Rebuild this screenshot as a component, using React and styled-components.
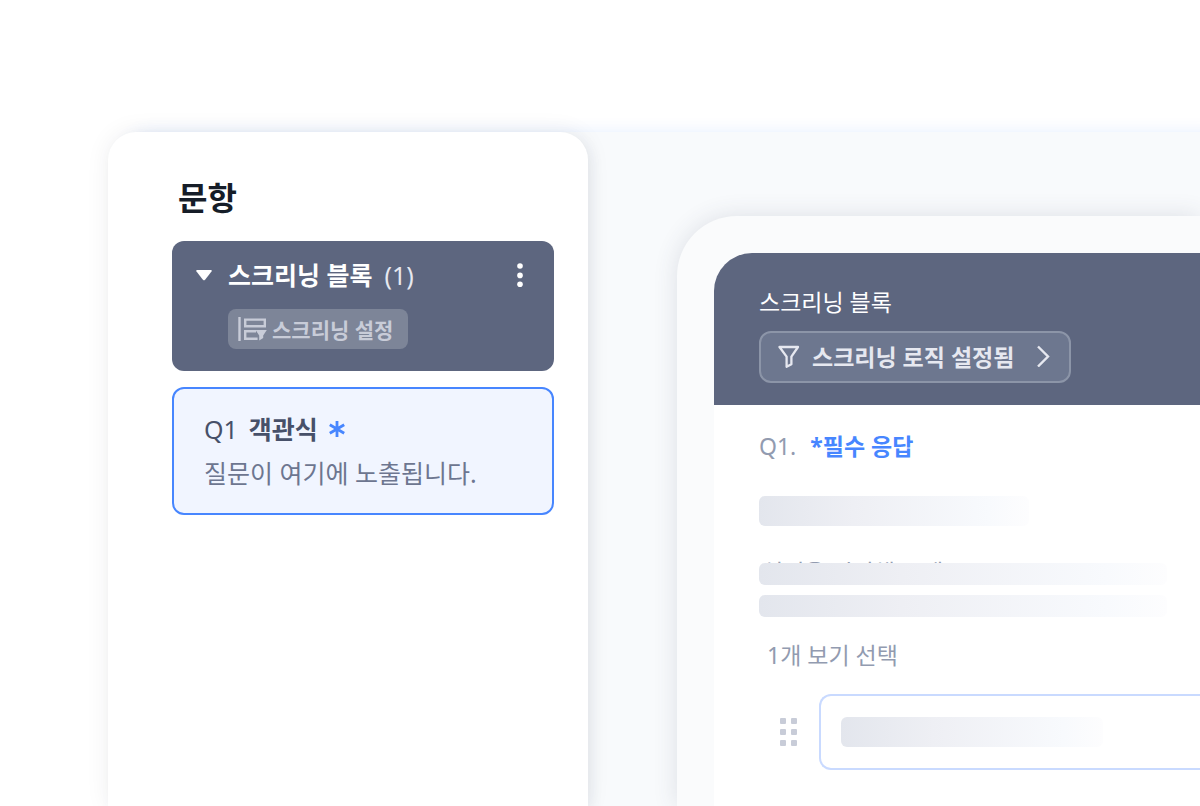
import * as React from "react"
import styled, { createGlobalStyle } from "styled-components"

const App = () => {
  return (
    <>
      <GlobalStyle />
      <Page>
        <Workspace>
          <Sidebar>
            <SidebarTitle>문항</SidebarTitle>
            <BlockCard>
              <BlockHeader>
                <IconButton aria-label="접기">
                  <svg width="16" height="11" viewBox="0 0 16 11">
                    <path d="M1.2 0h13.6q1.6 0 .7 1.4L9.3 9.6q-1.3 1.6-2.6 0L.5 1.4Q-.4 0 1.2 0z" fill="#fff" />
                  </svg>
                </IconButton>
                <BlockName>스크리닝 블록</BlockName>
                <BlockCount>(1)</BlockCount>
                <MoreButton aria-label="더보기">
                  <svg width="6" height="24" viewBox="0 0 6 24" fill="#fff">
                    <circle cx="3" cy="3" r="2.8" />
                    <circle cx="3" cy="12.4" r="2.8" />
                    <circle cx="3" cy="21.2" r="2.8" />
                  </svg>
                </MoreButton>
              </BlockHeader>
              <SettingChip>
                <ScreeningIcon />
                스크리닝 설정
              </SettingChip>
            </BlockCard>
            <QuestionCard>
              <QuestionName>
                <span>Q1</span>
                <b>객관식</b>
                <RequiredIcon />
              </QuestionName>
              <QuestionText>질문이 여기에 노출됩니다.</QuestionText>
            </QuestionCard>
          </Sidebar>
          <Canvas>
            <Device>
              <Screen>
                <ScreenHeader>
                  <ScreenTitle>스크리닝 블록</ScreenTitle>
                  <LogicButton>
                    <svg width="22" height="24" viewBox="0 0 22 24" fill="none" stroke="currentColor" strokeWidth="2.3" strokeLinejoin="round">
                      <path d="M1.5 3h18.5L13.4 12.6v7.6L8.6 22.8V12.6z" />
                    </svg>
                    스크리닝 로직 설정됨
                    <Chevron width="13" height="22" viewBox="0 0 13 22" fill="none" stroke="currentColor" strokeWidth="2.4">
                      <path d="M1 1.5l10 10L1 21.5" />
                    </Chevron>
                  </LogicButton>
                </ScreenHeader>
                <ScreenBody>
                  <RequiredLine>
                    <span>Q1.</span>
                    <b>*필수 응답</b>
                  </RequiredLine>
                  <Skeleton $width={270} $height={30} />
                  <Description>
                    <DescriptionText>설명을 입력해 주세요</DescriptionText>
                    <Skeleton $width={408} $height={22} />
                    <Skeleton $width={408} $height={22} />
                  </Description>
                  <Guide>1개 보기 선택</Guide>
                  <OptionRow>
                    <GripIcon />
                    <Option>
                      <Skeleton $width={262} $height={30} />
                    </Option>
                  </OptionRow>
                </ScreenBody>
              </Screen>
            </Device>
          </Canvas>
        </Workspace>
      </Page>
    </>
  )
}

const ScreeningIcon = () => (
  <svg width="30" height="24" viewBox="0 0 30 24" fill="none" stroke="currentColor" strokeWidth="2.4">
    <path d="M1.5 0v24" />
    <path d="M7.2 2.6h19.6v6.6H7.2z" />
    <path d="M18 14.2H7.2v7.6h12.4" />
    <path d="M17.6 13h11.2l-3.6 5.4V21l-4 2.4v-5z" fill="currentColor" stroke="none" />
  </svg>
)

const RequiredIcon = () => (
  <svg width="16" height="18" viewBox="0 0 16 18" fill="none" stroke="#4786ff" strokeWidth="2.8">
    <path d="M8 1v16M.8 4.8l14.4 8.4M15.2 4.8L.8 13.2" />
  </svg>
)

const GripIcon = () => (
  <svg width="18" height="28" viewBox="0 0 18 28" fill="#c8ccd8">
    {[0, 11, 22].map(y => (
      <React.Fragment key={y}>
        <rect x="0" y={y} width="6" height="6" rx="1" />
        <rect x="11" y={y} width="6" height="6" rx="1" />
      </React.Fragment>
    ))}
  </svg>
)

export default App

const GlobalStyle = createGlobalStyle`
  * {
    box-sizing: border-box;
  }
  body {
    margin: 0;
    background: #fff;
    font-family: "Noto Sans", "Noto Sans CJK KR", sans-serif;
    overflow-x: hidden;
  }
  button {
    font-family: inherit;
    cursor: pointer;
  }
  h2, p {
    margin: 0;
  }
  svg {
    flex-shrink: 0;
  }
`
const Page = styled.div`
  display: flex;
  min-height: 100vh;
  padding: 132px 0 0 108px;
  overflow: hidden;
`
const Workspace = styled.main`
  display: flex;
  flex: 1;
  min-width: 0;
  background: #f8fafc;
  border-top-left-radius: 28px;
  box-shadow: 16px 0 16px rgba(71, 134, 255, 0.14);
`
const Sidebar = styled.aside`
  display: flex;
  flex-direction: column;
  flex: 0 0 480px;
  padding: 46px 34px 0 64px;
  background: #fff;
  border-radius: 28px 28px 0 0;
  box-shadow: 0 0 24px rgba(40, 40, 50, 0.07), 4px 4px 12px rgba(93, 102, 127, 0.08);
`
const SidebarTitle = styled.h2`
  padding-left: 6px;
  color: #161d28;
  font-size: 32px;
  font-weight: 700;
  line-height: 40px;
`
const BlockCard = styled.section`
  margin-top: 23px;
  padding: 14px 24px 22px;
  background: #5d667f;
  border-radius: 12px;
`
const BlockHeader = styled.div`
  display: flex;
  align-items: center;
  height: 40px;
  color: #fff;
  font-size: 25px;
  line-height: 40px;
`
const IconButton = styled.button`
  display: flex;
  padding: 0;
  background: none;
  border: 0;
`
const MoreButton = styled(IconButton)`
  margin-left: auto;
  padding: 0 7px;
`
const BlockName = styled.b`
  margin-left: 16px;
`
const BlockCount = styled.span`
  margin-left: 12px;
  color: #e6e8f0;
`
const SettingChip = styled.button`
  display: flex;
  align-items: center;
  gap: 4px;
  height: 40px;
  margin: 14px 0 0 32px;
  padding: 0 15px 1px 10px;
  background: #7d8598;
  border: 0;
  border-radius: 8px;
  color: #c8ccd8;
  font-size: 21px;
  font-weight: 700;
`
const QuestionCard = styled.section`
  margin-top: 16px;
  padding: 20px 30px;
  background: #f1f5ff;
  border: 2px solid #4786ff;
  border-radius: 12px;
`
const QuestionName = styled.div`
  display: flex;
  align-items: center;
  gap: 11px;
  color: #475069;
  font-size: 25px;
  line-height: 40px;
`
const QuestionText = styled.p`
  margin-top: 4px;
  color: #6d7690;
  font-size: 25px;
  line-height: 40px;
`
const Canvas = styled.section`
  flex: 1;
  display: flex;
  min-width: 0;
  padding: 84px 0 0 89px;
`
const Device = styled.div`
  flex: 1;
  min-width: 0;
  padding: 37px 0 0 37px;
  background: #fafbfc;
  border-top-left-radius: 60px;
  box-shadow: 0 0 24px rgba(60, 66, 90, 0.14);
`
const Screen = styled.div`
  height: 100%;
  background: #fff;
  border-top-left-radius: 38px;
  overflow: hidden;
`
const ScreenHeader = styled.header`
  padding: 31px 45px 22px;
  background: #5d667f;
`
const ScreenTitle = styled.p`
  color: #fff;
  font-size: 23px;
  line-height: 36px;
`
const LogicButton = styled.button`
  display: flex;
  align-items: center;
  gap: 12px;
  height: 52px;
  margin-top: 11px;
  padding: 0 19px 2px 17px;
  background: #6d778f;
  border: 2px solid #8c95a8;
  border-radius: 12px;
  color: #e6e8f0;
  font-size: 23px;
  font-weight: 700;
`
const Chevron = styled.svg`
  margin-left: 11px;
`
const ScreenBody = styled.div`
  padding: 23px 0 36px 45px;
`
const RequiredLine = styled.div`
  display: flex;
  gap: 14px;
  margin-bottom: 32px;
  color: #929bb0;
  font-size: 23px;
  line-height: 36px;

  b {
    color: #4786ff;
  }
`
const Skeleton = styled.div`
  position: relative;
  width: ${props => props.$width}px;
  max-width: 100%;
  height: ${props => props.$height}px;
  background: linear-gradient(90deg, #e3e6ed, #eeeff4 35%, #f8fafd 85%, #fdfdfe);
  border-radius: 6px;
`
const Description = styled.div`
  position: relative;
  display: grid;
  gap: 10px;
  margin-top: 37px;
`
const DescriptionText = styled.p`
  position: absolute;
  top: -7px;
  left: 3px;
  color: #929bb0;
  font-size: 23px;
  line-height: 32px;
`
const Guide = styled.p`
  margin-top: 20px;
  padding-left: 8px;
  color: #929bb0;
  font-size: 23px;
  line-height: 36px;
`
const OptionRow = styled.div`
  display: flex;
  align-items: center;
  gap: 21px;
  margin-top: 21px;
  padding-left: 21px;
`
const Option = styled.div`
  flex: 1;
  padding: 21px 20px;
  border: 2px solid #c9daff;
  border-right: 0;
  border-radius: 12px 0 0 12px;
`
